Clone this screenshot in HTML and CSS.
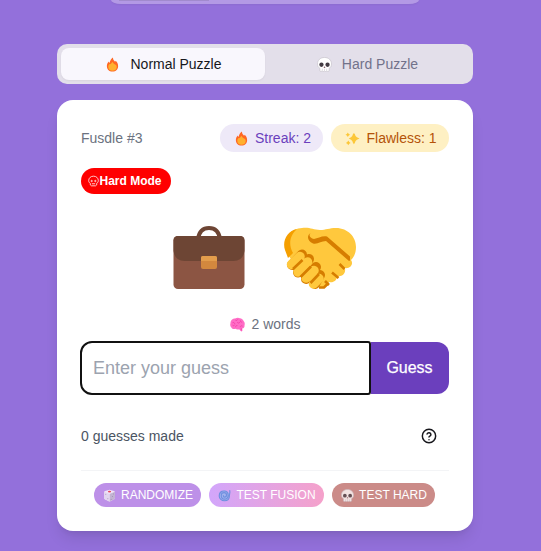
FILE: index.html
```
<!DOCTYPE html>
<html lang="en">
<head>
<meta charset="utf-8">
<title>Fusdle</title>
<link rel="stylesheet" href="styles.css">
</head>
<body>
<svg class="sprite" aria-hidden="true">
  <symbol id="fire" viewBox="0 0 32 32">
    <path fill="#ff6723" d="M28 19c0 7-4.500 12-12 12S4 26 4 19c0-4 1.500-7 4-9.500 0 1.500.6 2.500 1.800 3C11 8 13 3 17 1c0 4.500 2 6.500 4.500 9 .8-.5 1-1 1-2 3.500 3 5.500 6.500 5.500 11z"/>
    <path fill="#ffb02e" d="M25 21c0 5.500-3.500 8.500-9 8.500S7 26.500 7 21c0-3 1.500-5 4-6.500.3.700.8 1 1.500 1 .5-2 1.500-3.500 4-5.500.5 3 2 4 4 5.500 3 1.500 4.500 3 4.500 5.500z"/>
  </symbol>
  <symbol id="skull" viewBox="0 0 32 32">
    <path fill="#fff" stroke="#c9c5ce" stroke-width="1.600" d="M16 1C7 1 1 7 1 15c0 4 2 7.500 5 9v5c0 2 4 2.500 5 .5.500 2 4 2 5 0 .5 2 4 2 5 0 .5 2 5 1.500 5-.5v-5c3-1.500 5-5 5-9C31 7 25 1 16 1z"/>
    <path fill="none" stroke="#c9c5ce" stroke-width="1.200" d="M11.500 25v4m4.500-4v4m4.500-4v4"/>
    <circle cx="9.500" cy="16.500" r="4.600" fill="#433b43"/><circle cx="22.500" cy="16.500" r="4.600" fill="#433b43"/>
    <path fill="#6c3340" d="m16 19.500 2 3.500h-4z"/>
  </symbol>
  <symbol id="skull-line" viewBox="0 0 24 24">
    <g fill="none" stroke="#fff" stroke-width="1.700"><path d="M12 1.500C6 1.500 1.500 5.500 1.500 11c0 3 1.500 5 3.500 6v3.500L7.500 22.500h9l2.500-2V17c2-1 3.500-3 3.500-6 0-5.500-4.500-9.500-10.500-9.500z"/><circle cx="8" cy="12" r="1.500"/><circle cx="16" cy="12" r="1.500"/><path d="M8.500 18h7"/></g>
  </symbol>
  <symbol id="sparkles" viewBox="0 0 32 32">
    <path fill="#fcc737" d="M19 4q2.500 2 3.500 6.500 1.500 2.500 8.500 5.500-7 3-8.500 5.500Q21.500 26 19 28q-2.500-2-3.500-6.500Q14 19 8 16q6-3 7.500-5.500Q16.500 6 19 4zM6 3q1.500 4 5 5-3.500 1-5 5-1.500-4-5-5 3.500-1 5-5zM7 20.500q1.500 4 5 5-3.500 1-5 5-1.500-4-5-5 3.500-1 5-5z"/>
  </symbol>
  <symbol id="brain" viewBox="0 0 32 32">
    <path fill="#ff6dc6" d="M11 3c3-2 8-2 10-.5 4 .5 7 2.500 8 6 2.500 3 3 6 2 9 .5 4-1.500 7-5 7l.5 4c0 3-3 3-4 1l-3-3.500c-3 1-6 .5-8-1-4 2-8 0-8.500-2.500C0 20 0 16 1 13.500 1 7 5.500 3 11 3z"/>
    <path fill="none" stroke="#f23ba4" stroke-width="1.700" stroke-linecap="round" d="M12 7c1 1 3 1 4-1m6 2c0 2 1 3 3 3M6 12c2-1 4 0 4 2m6-2c2 2 4 1 5-1M6 18c1 1 3 1 4-1m2 4c0-2 1-3 3-3m11 1c-2-1-4 0-4 2M24 28v-3"/>
  </symbol>
  <symbol id="die" viewBox="0 0 32 32">
    <path fill="#fff" d="M14 2.200q2-.8 4 0l9 3q2.500 1 2.500 3V22q0 2-2 3.200l-9.500 5q-2 1-4 0l-9.500-5q-2-1.200-2-3.200V8.200q0-2 2.500-3z"/><path fill="#c4bfcb" d="m16 12 13.500-5v15q0 2-2 3.200L16 31z"/><path fill="#efedf2" d="m2.500 7 13.500 5v19L4.500 25.200q-2-1.200-2-3.200z"/>
    <ellipse cx="16" cy="6.500" rx="4" ry="2" fill="#f8312f"/>
    <g fill="#7a7284"><circle cx="7" cy="13" r="1.200"/><circle cx="12" cy="24" r="1.200"/><circle cx="20" cy="25" r="1.200"/><circle cx="23" cy="18.500" r="1.200"/><circle cx="26" cy="12" r="1.200"/></g>
  </symbol>
  <symbol id="cyclone" viewBox="0 0 32 32">
    <circle cx="15.500" cy="16.500" r="13" fill="#83bdea"/>
    <path fill="none" stroke="#2c82d3" stroke-width="2.800" stroke-linecap="round" d="M29 4c1 6-1 8-1 13 0 7-5 12-12 12S3 24 3 17 8 5 15 5s10 5 10 11-4 9-9 9-8-4-8-9 3-7 7-7 6 3 6 6-2 5-5 5-3-2-3-4"/>
  </symbol>
</svg>

<div class="page">
  <header class="switcher"><span></span></header>

  <nav class="tabs">
    <button class="tab active"><svg class="icon"><use href="#fire"/></svg><span>Normal Puzzle</span></button>
    <button class="tab"><svg class="icon"><use href="#skull"/></svg><span>Hard Puzzle</span></button>
  </nav>

  <main class="card">
    <div class="heading">
      <span class="name">Fusdle #3</span>
      <div class="stats">
        <span class="pill streak"><svg class="icon"><use href="#fire"/></svg>Streak: 2</span>
        <span class="pill flawless"><svg class="icon"><use href="#sparkles"/></svg>Flawless: 1</span>
      </div>
    </div>
    <span class="mode"><svg><use href="#skull-line"/></svg>Hard Mode</span>

    <div class="puzzle">
      <svg viewBox="0 0 72 72">
        <path fill="none" stroke="#6d4534" stroke-width="4" d="M25 14c1-7 5-11 11-11s10 4 11 11"/>
        <rect x=".5" y="11" width="71" height="53" rx="4.500" fill="#8c5543"/>
        <path fill="#6d4534" d="M5 11h62q4.500 0 4.500 4.500V26q-1.500 10-11 10h-49Q2 36 .5 26V15.500Q.5 11 5 11z"/>
        <rect x="28" y="31" width="16" height="13" rx="2" fill="#d3883e"/><path fill="#e39d4c" d="M30 31h12q2 0 2 2v3H28v-3q0-2 2-2z"/>
      </svg>
      <svg viewBox="0 0 72 72">
        <path fill="#ffc83d" d="M18 3c8-1 11 2 18 2 6 0 9-2 16-2 12 0 20 9 20 19 0 6-2 10-5 13 3 4-1 9-6 8 1 6-3 9-8 8 0 5-4 7-8 6-1 4-5 7-9 5-9-5-24-20-32-32C-3 19 3 4 18 3z"/>
        <path fill="#f59f00" d="M13 4C3 6-2 16 1 25l3 8 5-5C4 19 6 10 13 4z"/>
        <g fill="none" stroke-linecap="round">
          <g stroke="#d67d00" stroke-width="10"><path d="M18 29.500 8 40M25 34 14 47.500M32 42 22 54M36 50l-5 9"/></g>
          <g stroke="#ffc83d" stroke-width="9.500"><path d="M16 31.500 7.500 39.500M23.500 37 14 47M30 45.500 22 53M35 53.500 29.500 59"/></g>
          <g stroke="#d67d00" stroke-width="2.600" stroke-linecap="butt"><path d="M18.500 35 9 44M27 41.500 16.500 52M35 49 26.500 58M35 62.500h5l4-4"/></g>
        </g>
        <path fill="#d67d00" d="M27 8c-3 2-1 5.500 3 6 4-.5 8-3.500 13-2.500l23 20v4l-1 .5-23-20c-5 0-8 3.500-13 2.500-6-2-6.500-9-2-10.500z"/>
        <path fill="none" stroke="#d67d00" stroke-width="2.600" d="m55.500 39 5 5M48 47.500l6.500 5.500M41 56l4 4"/>
      </svg>
    </div>

    <div class="hint"><svg class="icon"><use href="#brain"/></svg>2 words</div>
    <form class="guess"><input type="text" placeholder="Enter your guess" aria-label="Guess"><button type="button">Guess</button></form>

    <div class="progress"><span>0 guesses made</span>
      <svg viewBox="0 0 24 24" fill="none" stroke="#17171c" stroke-width="2.200" stroke-linecap="round"><circle cx="12" cy="12" r="10"/><path d="M9.100 9a3 3 0 0 1 5.800 1c0 2-2.900 2-2.900 3.500M12 17.500h.01"/></svg>
    </div>
    <div class="tools">
      <button class="randomize"><svg><use href="#die"/></svg>RANDOMIZE</button>
      <button class="fusion"><svg><use href="#cyclone"/></svg>TEST FUSION</button>
      <button class="hard"><svg><use href="#skull"/></svg>TEST HARD</button>
    </div>
  </main>
</div>
</body>
</html>
```
FILE: styles.css
```
* { box-sizing: border-box; }
body { margin: 0; height: 551px; overflow: hidden; background: #9370db; font: 14px/20px "Liberation Sans", Arial, sans-serif; }
button, input { font: inherit; border: 0; margin: 0; }
svg { flex: none; }
.sprite { position: absolute; width: 0; height: 0; }
.page { width: 416px; margin-left: 57px; }
.switcher { width: 308px; height: 4px; margin: 0 auto 40px 54px; background: #b399e5; border-radius: 0 0 10px 10px / 0 0 4px 4px; box-shadow: 0 1px 2px #0000000d; }
.switcher span { display: block; width: 90px; height: 1px; margin-left: 8px; background: #a18acd; }
.icon { width: 15px; height: 15px; }
.tabs { display: flex; height: 40px; padding: 4px; background: #e3dfea; border-radius: 10px; }
.tab { display: flex; align-items: center; justify-content: center; gap: 10px; flex: 1; padding: 0 0 0 1px; border-radius: 8px; background: none; color: #72728a; }
.tab.active { background: #f9f7fd; color: #17171c; box-shadow: 0 1px 2px #0000000d; }
.card { height: 431px; margin-top: 16px; padding: 24px; background: #fff; border-radius: 16px; box-shadow: 0 10px 15px -3px #0000001a, 0 4px 6px -4px #0000001a; }
.heading { display: flex; align-items: center; justify-content: space-between; height: 28px; }
.name { color: #6b7280; }
.stats { display: flex; gap: 8px; }
.pill { display: flex; align-items: center; justify-content: center; gap: 6px; height: 28px; padding-left: 2px; border-radius: 14px; }
.streak { width: 103px; background: #eee9f8; color: #6b3fbd; }
.flawless { width: 118px; background: #fef0c3; color: #b45309; }
.mode { display: flex; align-items: center; justify-content: center; width: 90px; height: 26px; margin-top: 16px; padding-right: 2px; border-radius: 13px; background: #f00; color: #fff; font-size: 12px; font-weight: bold; }
.mode svg { width: 11px; height: 12px; }
.puzzle { display: flex; justify-content: center; gap: 39px; margin-top: 31px; padding-right: 2px; }
.puzzle svg { width: 72px; height: 72px; }
.hint { display: flex; justify-content: center; align-items: center; gap: 6px; height: 20px; margin-top: 17px; padding-left: 1px; color: #6b7280; }
.guess { display: flex; height: 52px; margin-top: 8px; }
.guess input { width: 291px; height: 54px; margin: -1px 0 0 -1px; padding: 0 11px; border: 2px solid #111; border-radius: 12px 3px 3px 12px; outline: 0; background: #fff; font-size: 18px; }
.guess input::placeholder { color: #9ca3af; opacity: 1; }
.guess button { flex: 1; padding: 0 1px 0 0; background: #6b3fbd; border-radius: 0 12px 12px 0; color: #fff; font-size: 16px; -webkit-text-stroke: .25px #fff; }
.progress { display: flex; align-items: center; justify-content: space-between; height: 40px; margin-top: 22px; padding-right: 12px; color: #4b5563; }
.progress svg { width: 16px; height: 16px; }
.tools { display: flex; justify-content: center; gap: 8px; margin-top: 14px; padding: 12px 2px 0 0; border-top: 1px solid #f3f4f6; }
.tools button { display: flex; align-items: center; justify-content: center; gap: 5px; height: 24px; padding: 0 0 0 2px; border-radius: 12px; color: #fff; font-size: 12px; }
.tools svg { width: 13px; height: 13px; opacity: .75; }
.tools .randomize { width: 107px; background: #bd90e8; }
.tools .fusion { width: 115px; background: linear-gradient(90deg, #d2a6fb, #f5a1ca); }
.tools .fusion svg { opacity: .6; }
.tools .hard { width: 103px; background: #cb8b88; }
```
